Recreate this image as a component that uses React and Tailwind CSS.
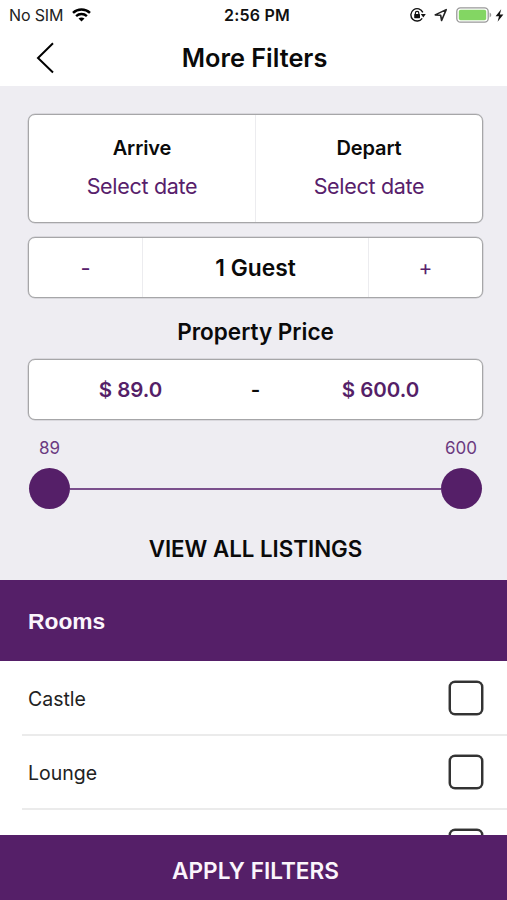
import React, { useState } from 'react';

const ROOMS = [
    { id: 1, name: 'Castle' },
    { id: 2, name: 'Lounge' },
    { id: 3, name: '' }
];

const StatusBar = () => (
    <div className="relative flex h-[30px] items-center justify-between pl-[9px] pr-[3px] text-[16px] leading-[20px]">
        <div className="flex items-center gap-[8.5px]">
            <span className="tracking-[-0.15px] text-[#222]">No SIM</span>
            <svg width="19" height="14" viewBox="0 0 19 14" fill="none" stroke="#000">
                <path d="M1 4.9C5.8 0.4 13.2 0.4 18 4.9" strokeWidth="2.5" />
                <path d="M4.1 8.2C7.2 5.3 11.8 5.3 14.9 8.2" strokeWidth="2.4" />
                <path d="M9.5 13.6L6.5 10.6C8.2 9 10.8 9 12.5 10.6Z" fill="#000" stroke="none" />
            </svg>
        </div>
        <span className="absolute left-1/2 ml-[3.5px] -translate-x-1/2 whitespace-nowrap font-semibold tracking-[0.2px] text-[#111]">2:56 PM</span>
        <div className="flex items-center">
            {/* Rotation lock */}
            <svg width="16" height="16" viewBox="0 0 16 16" fill="none">
                <path d="M12.2 11.4A6.2 6.2 0 1 1 12.8 5.4" stroke="#111" strokeWidth="1.4" />
                <path d="M10.8 7H15.8L13.3 10.6Z" fill="#111" />
                <rect x="4.2" y="7" width="5.8" height="4.2" rx="0.6" fill="#111" />
                <path d="M5.4 7.2V6A1.7 1.7 0 0 1 8.8 6V7.2" stroke="#111" strokeWidth="1.2" />
            </svg>
            {/* Location */}
            <svg className="ml-[8px] mr-[1px]" width="14" height="14" viewBox="0 0 14 14" fill="none">
                <path d="M1.2 6.9L12.2 1.6L7.6 12.5L6.7 7.3Z" stroke="#222" strokeWidth="1.6" strokeLinejoin="round" />
            </svg>
            {/* Battery */}
            <svg className="ml-[7px]" width="37" height="16" viewBox="0 0 37 16" fill="none">
                <rect x="0.8" y="0.8" width="31.4" height="14.4" rx="3.6" stroke="#999" strokeWidth="1.3" />
                <rect x="2.8" y="2.8" width="27.4" height="10.4" rx="1.8" fill="#83d663" />
                <path d="M33.6 5.6C35.8 6.4 35.8 9.6 33.6 10.4Z" fill="#999" />
            </svg>
            <svg className="ml-[2px]" width="9" height="13" viewBox="0 0 9 13">
                <path d="M6.2 0.3L0.6 7.3H4L2.6 12.7L8.4 5.5H4.8Z" fill="#111" />
            </svg>
        </div>
    </div>
);

const DateCell = ({ label }) => (
    <button className="flex flex-1 flex-col items-center pt-[20px]">
        <span className="text-[20px] font-semibold leading-[26px] tracking-[-0.1px]">{label}</span>
        <span className="mt-[11px] text-[21.5px] leading-[28px] tracking-[-0.3px] text-[#57206b]">Select date</span>
    </button>
);

const Thumb = ({ value }) => (
    <div className="flex w-[41px] flex-col items-center">
        <span className="text-[17px] leading-[22px] text-[#6b3a80]">{value}</span>
        <div className="mt-[9px] size-[41px] rounded-full bg-[#551f68]" />
    </div>
);

const RoomRow = ({ name, checked, onToggle }) => (
    <div className="ml-[22px] flex h-[74px] shrink-0 items-start justify-between border-b-2 border-[#ebebeb] pl-[6px] pr-[24.5px] pt-[19px]">
        <span className="text-[19.5px] leading-[37px] text-[#222]">{name}</span>
        <button
            role="checkbox"
            aria-checked={checked}
            aria-label={name}
            onClick={onToggle}
            className="size-[34px] rounded-[6px] border-2 border-[#333] bg-white shadow-[0_0_0_0.5px_#444] aria-checked:bg-[#551f68]"
        />
    </div>
);

const App = () => {
    const [guests, setGuests] = useState(1);
    const [selected, setSelected] = useState([]);

    const toggleRoom = (id) => {
        setSelected(prev => (prev.includes(id) ? prev.filter(n => n !== id) : [...prev, id]));
    };

    return (
        <div className="flex h-[900px] w-[507px] flex-col overflow-hidden bg-white font-['Inter',sans-serif] text-[#0a0a0a]">
            {/* Header */}
            <header className="h-[86px] shrink-0">
                <StatusBar />
                <div className="flex h-[56px] items-center justify-between pl-[36px] pr-[34px]">
                    <button aria-label="Back">
                        <svg width="20" height="32" viewBox="0 0 20 32" fill="none" stroke="#000" strokeWidth="2">
                            <path d="M17 1.2L2 16L17 30.5" />
                        </svg>
                    </button>
                    <h1 className="text-[25.3px] font-semibold leading-[30px]">More Filters</h1>
                    <div className="w-[20px]" />
                </div>
            </header>

            {/* Filters */}
            <section className="flex h-[494px] shrink-0 flex-col bg-[#eeedf2] pl-[28px] pr-[24px] pt-[28px]">
                <div className="flex h-[109px] divide-x divide-[#ececef] rounded-[7px] border border-[#a6a6a8] bg-white shadow-[0_0_0_0.5px_#c4c4c8]">
                    <DateCell label="Arrive" />
                    <DateCell label="Depart" />
                </div>

                <div className="mt-[14px] flex h-[61px] divide-x divide-[#ececef] rounded-[7px] border border-[#a6a6a8] bg-white shadow-[0_0_0_0.5px_#c4c4c8]">
                    <button className="w-[114px] pt-[2px] text-[22px] text-[#57206b]" onClick={() => setGuests(Math.max(1, guests - 1))}>-</button>
                    <div className="flex flex-1 items-center justify-center pt-[2px] text-[22.8px] font-semibold">{guests} Guest</div>
                    <button className="w-[113px] text-[21px] text-[#57206b]" onClick={() => setGuests(guests + 1)}>+</button>
                </div>

                <h2 className="mt-[19px] text-center text-[22.5px] font-semibold leading-[30px]">Property Price</h2>

                <div className="mt-[12px] flex h-[61px] items-center rounded-[7px] border border-[#a6a6a8] bg-white pt-[2px] text-[20.5px] font-semibold shadow-[0_0_0_0.5px_#c4c4c8]">
                    <span className="w-[203px] text-center text-[#551f68]">$ 89.0</span>
                    <span className="flex-1 text-center">-</span>
                    <span className="w-[203px] text-center text-[#551f68]">$ 600.0</span>
                </div>

                <div className="mt-[17px] flex items-end pl-[1px] pr-[1.5px]">
                    <Thumb value={89} />
                    <div className="mb-[19px] h-[2px] flex-1 bg-[#7a4f8c]" />
                    <Thumb value={600} />
                </div>

                <button className="mt-[25px] text-[22.3px] font-semibold leading-[30px]">VIEW ALL LISTINGS</button>
            </section>

            {/* Rooms */}
            <div className="flex h-[81px] shrink-0 items-center bg-[#551f68] pl-[28px] pt-[2px] font-['Liberation_Sans',sans-serif] text-[22.8px] font-bold text-[#fbf5fc]">
                Rooms
            </div>
            <div className="flex min-h-0 flex-1 flex-col overflow-hidden pt-px">
                {ROOMS.map(room => (
                    <RoomRow
                        key={room.id}
                        name={room.name}
                        checked={selected.includes(room.id)}
                        onToggle={() => toggleRoom(room.id)}
                    />
                ))}
            </div>

            {/* Apply */}
            <button className="h-[65px] shrink-0 bg-[#551f68] pl-[4px] pt-[6px] text-[22.6px] font-semibold text-[#fbf5fc]">
                APPLY FILTERS
            </button>
        </div>
    );
};

export default App;
